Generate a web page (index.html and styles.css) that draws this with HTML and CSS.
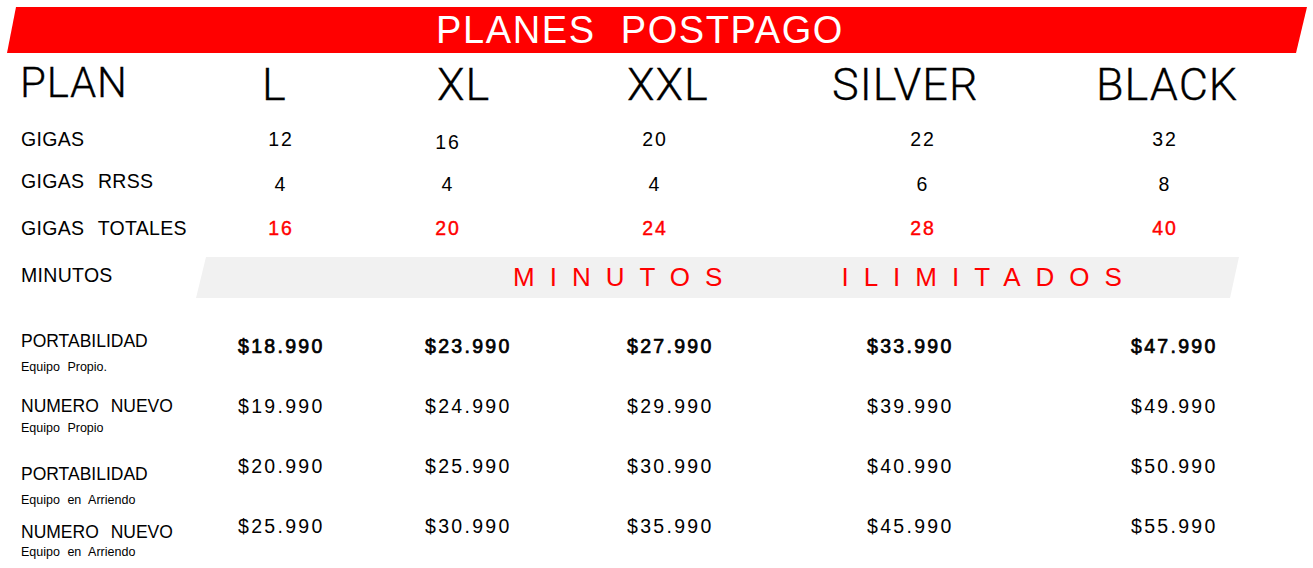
FILE: index.html
```html
<!DOCTYPE html>
<html lang="es">
<head>
<meta charset="utf-8">
<title>Planes Postpago</title>
<link rel="stylesheet" href="styles.css">
</head>
<body>
<div class="page">
  <header class="banner">
    <h1 class="banner-title">PLANES POSTPAGO</h1>
  </header>

  <div class="plans">
    <div class="plan-label">PLAN</div>
    <div class="plan-name">L</div>
    <div class="plan-name">XL</div>
    <div class="plan-name">XXL</div>
    <div class="plan-name">SILVER</div>
    <div class="plan-name">BLACK</div>
  </div>

  <section class="gigas">
    <div class="g-label">GIGAS</div>
    <div class="g-val">12</div>
    <div class="g-val low">16</div>
    <div class="g-val">20</div>
    <div class="g-val">22</div>
    <div class="g-val">32</div>

    <div class="g-label">GIGAS RRSS</div>
    <div class="g-val low">4</div>
    <div class="g-val low">4</div>
    <div class="g-val low">4</div>
    <div class="g-val low">6</div>
    <div class="g-val low">8</div>

    <div class="g-label">GIGAS TOTALES</div>
    <div class="g-val total">16</div>
    <div class="g-val total">20</div>
    <div class="g-val total">24</div>
    <div class="g-val total">28</div>
    <div class="g-val total">40</div>
  </section>

  <div class="minutos">
    <div class="m-label">MINUTOS</div>
    <div class="band">
      <span class="band-word">MINUTOS</span>
      <span class="band-word">ILIMITADOS</span>
    </div>
  </div>

  <section class="prices">
    <div class="p-row r1">
      <div class="p-label"><div class="p-main">PORTABILIDAD</div><div class="p-sub">Equipo Propio.</div></div>
      <div class="price bold">$18.990</div>
      <div class="price bold">$23.990</div>
      <div class="price bold">$27.990</div>
      <div class="price bold">$33.990</div>
      <div class="price bold">$47.990</div>
    </div>
    <div class="p-row r2">
      <div class="p-label"><div class="p-main">NUMERO NUEVO</div><div class="p-sub">Equipo Propio</div></div>
      <div class="price">$19.990</div>
      <div class="price">$24.990</div>
      <div class="price">$29.990</div>
      <div class="price">$39.990</div>
      <div class="price">$49.990</div>
    </div>
    <div class="p-row r3">
      <div class="p-label"><div class="p-main">PORTABILIDAD</div><div class="p-sub">Equipo en Arriendo</div></div>
      <div class="price">$20.990</div>
      <div class="price">$25.990</div>
      <div class="price">$30.990</div>
      <div class="price">$40.990</div>
      <div class="price">$50.990</div>
    </div>
    <div class="p-row r4">
      <div class="p-label"><div class="p-main">NUMERO NUEVO</div><div class="p-sub">Equipo en Arriendo</div></div>
      <div class="price">$25.990</div>
      <div class="price">$30.990</div>
      <div class="price">$35.990</div>
      <div class="price">$45.990</div>
      <div class="price">$55.990</div>
    </div>
  </section>
</div>
</body>
</html>
```

FILE: styles.css
```css
* { box-sizing: border-box; }

body {
  margin: 0;
  background: #ffffff;
  color: #000000;
  font-family: "Liberation Sans", Arial, sans-serif;
}

.page {
  width: 1313px;
  padding-top: 7px;
}

/* Banner */
.banner {
  margin-left: 7px;
  width: 1300px;
  height: 46px;
  background: #ff0000;
  clip-path: polygon(9px 0, 100% 0, calc(100% - 11px) 100%, 0 100%);
  display: flex;
  justify-content: center;
  padding-right: 34px;
}

.banner-title {
  margin: 0;
  font-size: 38px;
  font-weight: normal;
  line-height: 46px;
  color: #ffffff;
  letter-spacing: 1.6px;
  word-spacing: 13px;
  white-space: nowrap;
}

/* Plan names */
.plans {
  display: grid;
  grid-template-columns: 242px 175px 190px 205px 264px 1fr;
  padding-left: 20px;
  margin-top: 9px;
  align-items: start;
  font-family: Roboto, "Liberation Sans", sans-serif;
  font-weight: 300;
  -webkit-text-stroke: 0.3px #000;
}

.plan-label {
  font-size: 42px;
  line-height: 45px;
  letter-spacing: 0.8px;
  margin-top: -2px;
}

.plan-name {
  font-size: 45px;
  line-height: 45px;
  letter-spacing: 1px;
}

/* Gigas */
.gigas {
  display: grid;
  grid-template-columns: 199px 120px 214px 200px 336px 148px;
  grid-template-rows: 42px 47px 20px;
  padding-left: 21px;
  margin-top: 22px;
  align-items: start;
}

.g-label {
  font-size: 19.5px;
  line-height: 20px;
  word-spacing: 8px;
  letter-spacing: 0.3px;
  white-space: nowrap;
}

.g-val {
  font-size: 19.5px;
  line-height: 20px;
  letter-spacing: 2px;
  text-align: center;
  padding-left: 2px;
}

.g-val.low { padding-top: 3px; }

.g-val.total {
  color: #ff0000;
  -webkit-text-stroke: 0.4px #ff0000;
}

/* Minutos */
.minutos {
  display: grid;
  grid-template-columns: 175px 1043px;
  padding-left: 21px;
  margin-top: 19px;
  align-items: start;
}

.m-label {
  font-size: 19.5px;
  line-height: 20px;
  letter-spacing: 0.3px;
  margin-top: 8px;
}

.band {
  height: 41px;
  background: #f1f1f1;
  clip-path: polygon(10px 0, 100% 0, calc(100% - 9px) 100%, 0 100%);
  display: flex;
  align-items: center;
  gap: 104px;
  padding-left: 317px;
  color: #ff0000;
  font-size: 26px;
  line-height: 41px;
  letter-spacing: 15px;
}

/* Prices */
.p-row {
  display: grid;
  grid-template-columns: 217px 187px 202px 240px 264px 1fr;
  padding-left: 21px;
  align-items: start;
}

.p-main {
  font-size: 17.5px;
  line-height: 17px;
  word-spacing: 7px;
  white-space: nowrap;
}

.p-sub {
  font-size: 12.5px;
  line-height: 14px;
  word-spacing: 4px;
  white-space: nowrap;
}

.price {
  font-size: 19.5px;
  line-height: 20px;
  letter-spacing: 2.3px;
  white-space: nowrap;
}

.price.bold {
  -webkit-text-stroke: 0.7px #000;
}

.r1 { margin-top: 35px; }
.r1 .price { margin-top: 3px; }
.r1 .p-sub { margin-top: 10px; }

.r2 { margin-top: 22px; }
.r2 .p-label { margin-top: 2px; }
.r2 .p-sub { margin-top: 6px; }

.r3 { margin-top: 21px; }
.r3 .p-label { margin-top: 10px; }
.r3 .p-sub { margin-top: 10px; }

.r4 { margin-top: 9px; }
.r4 .p-label { margin-top: 8px; }
.r4 .p-sub { margin-top: 4px; }
```
